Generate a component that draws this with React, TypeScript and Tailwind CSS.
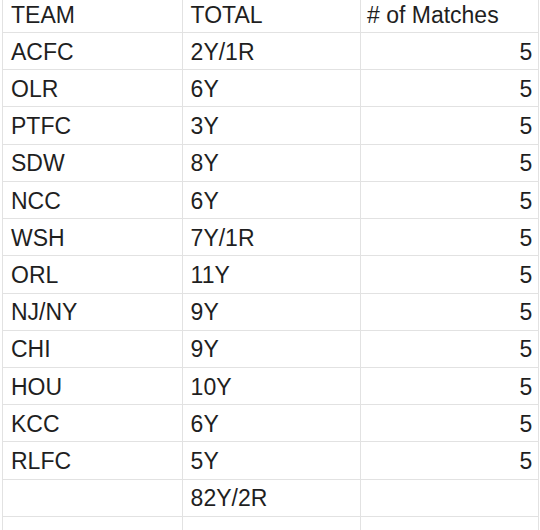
import React from "react";

const rows: [string, string, string][] = [
  ["ACFC", "2Y/1R", "5"],
  ["OLR", "6Y", "5"],
  ["PTFC", "3Y", "5"],
  ["SDW", "8Y", "5"],
  ["NCC", "6Y", "5"],
  ["WSH", "7Y/1R", "5"],
  ["ORL", "11Y", "5"],
  ["NJ/NY", "9Y", "5"],
  ["CHI", "9Y", "5"],
  ["HOU", "10Y", "5"],
  ["KCC", "6Y", "5"],
  ["RLFC", "5Y", "5"],
  ["", "82Y/2R", ""],
  ["", "", ""],
];

function Cell({ text, right, h }: { text: string; right?: boolean; h: string }) {
  return (
    <div
      className={`flex items-end border-r border-b border-[#e2e2e2] pb-[5.5px] ${h} ${
        right ? "justify-end pr-[6px]" : "pl-[8px]"
      }`}
    >
      <span className="leading-[23px] whitespace-nowrap">{text}</span>
    </div>
  );
}

export default function App() {
  return (
    <div
      className="w-[540px] h-[530px] overflow-hidden bg-white pl-[2px] text-[23px] text-[#1f1f1f]"
      style={{ fontFamily: '"Liberation Sans", Arial, sans-serif' }}
    >
      <div className="grid grid-cols-[179.6px_178.4px_178.4px] border-l border-[#e2e2e2]">
        <Cell text="TEAM" h="h-[33px]" />
        <Cell text="TOTAL" h="h-[33px]" />
        <div className="flex items-end border-r border-b border-[#e2e2e2] pb-[5.5px] h-[33px] pl-[6px]">
          <span className="leading-[23px] whitespace-nowrap"># of Matches</span>
        </div>
        {rows.map((r, i) => (
          <React.Fragment key={i}>
            <Cell text={r[0]} h="h-[37.23px]" />
            <Cell text={r[1]} h="h-[37.23px]" />
            <Cell text={r[2]} right h="h-[37.23px]" />
          </React.Fragment>
        ))}
      </div>
    </div>
  );
}
